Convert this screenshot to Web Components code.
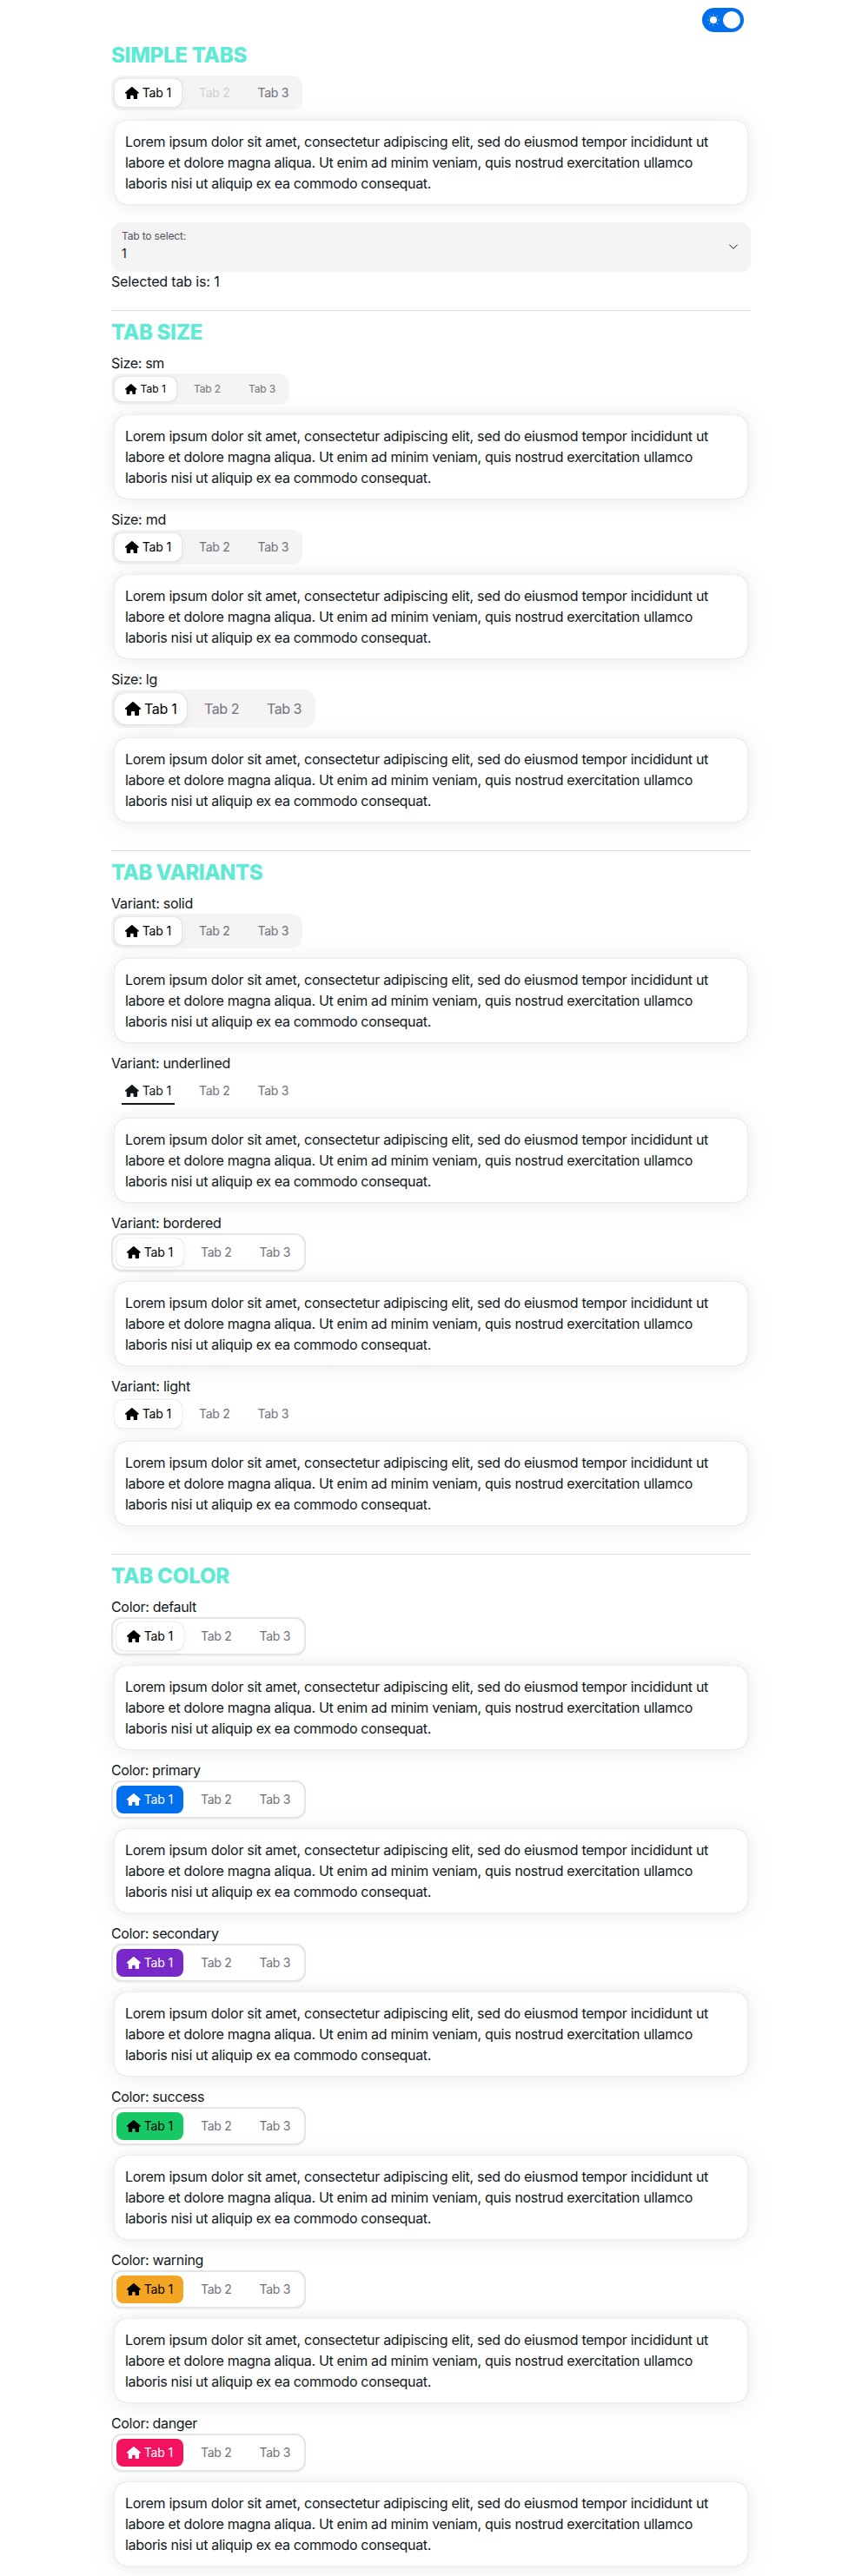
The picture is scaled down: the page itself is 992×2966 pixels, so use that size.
<!DOCTYPE html>
<html lang="en"><head><meta charset="utf-8"><title>Tabs</title>
<style>
body{margin:0;background:#fff;color:#11181c;font:16px/24px Inter,"Liberation Sans",sans-serif}
</style></head><body>
<demo-page></demo-page>
<script>
const define=(name,html,setup)=>{
  const t=document.createElement('template');t.innerHTML=html;
  customElements.define(name,class extends HTMLElement{
    constructor(){super();this.attachShadow({mode:'open'}).append(t.content.cloneNode(true));}
    connectedCallback(){if(setup)setup(this,this.shadowRoot);}
  });
};

// <fit-text w="120">: one line of text, tracked so that its advance is w pixels.
define('fit-text',`<style>:host{display:inline-block;white-space:nowrap;vertical-align:top}</style><slot></slot>`,h=>{
  const w=parseFloat(h.getAttribute('w'));
  if(!w)return;
  h.style.letterSpacing='0px';
  const natural=h.getBoundingClientRect().width;
  if(natural)h.style.letterSpacing=((w-natural)/h.textContent.length).toFixed(3)+'px';
});

define('home-icon',`<style>:host{display:block;flex:none;width:1.125em;height:1em}svg{display:block;width:100%;height:100%}</style>
<svg viewBox="0 0 576 512" fill="currentColor"><path d="M575.8 255.5c0 18-15 32.1-32 32.1h-32l.7 160.2c0 2.7-.2 5.4-.5 8.1V472c0 22.1-17.9 40-40 40H456c-1.1 0-2.2 0-3.3-.1c-1.4 .1-2.8 .1-4.2 .1H416 392c-22.1 0-40-17.900-40-40V448 384c0-17.700-14.300-32-32-32H256c-17.700 0-32 14.300-32 32v64 24c0 22.100-17.900 40-40 40H160 128.100c-1.500 0-3-.1-4.500-.2c-1.200 .1-2.400 .2-3.600 .2H104c-22.100 0-40-17.900-40-40V360c0-.9 0-1.900 .1-2.800V287.600H32c-18 0-32-14-32-32.100c0-9 3-17 10-24L266.400 8c7-7 15-8 22-8s15 2 21 7L564.800 231.500c8 7 12 15 11 24z"/></svg>`);

define('tab-item',`<style>
:host{box-sizing:border-box;display:flex;align-items:center;gap:4px;height:var(--tab-h);padding:0 12px;color:#71717a;border-radius:var(--tab-r);white-space:nowrap}
:host([disabled]){color:#d0d0d3}
:host([selected]){background:var(--cursor,#fff);color:var(--cursor-fg,#000);box-shadow:var(--cursor-shadow)}
:host([selected][underlined]){background:none;box-shadow:none;color:#11181c;position:relative}
:host([selected][underlined])::after{content:"";position:absolute;bottom:0;left:10%;width:80%;height:2px;background:#11181c}
</style><slot name="icon"></slot><slot></slot>`);

define('tab-list',`<style>
:host{display:flex;--tab-h:32px;--tab-r:8px;--cursor-shadow:0 0 5px rgba(0,0,0,.02),0 2px 10px rgba(0,0,0,.06),0 0 1px rgba(0,0,0,.3);font-size:14px;line-height:20px}
.bar{display:flex;gap:8px;padding:4px;background:#f4f4f4;border-radius:12px;height:var(--tab-h)}
:host([size=sm]){--tab-h:28px;font-size:12px;line-height:16px}
:host([size=lg]){--tab-h:36px;--tab-r:12px;font-size:16px;line-height:24px}
:host([size=lg]) .bar{border-radius:14px}
:host([variant=underlined]) .bar,:host([variant=light]) .bar{background:none}
:host([variant=bordered]) .bar{background:none;border:2px solid #e4e4e5;box-shadow:0 1px 2px rgba(0,0,0,.05)}
:host([color=primary]){--cursor:#006fee;--cursor-fg:#fff;--cursor-shadow:none}
:host([color=secondary]){--cursor:#7828c8;--cursor-fg:#fff;--cursor-shadow:none}
:host([color=success]){--cursor:#17c964;--cursor-shadow:none}
:host([color=warning]){--cursor:#f5a524;--cursor-shadow:none}
:host([color=danger]){--cursor:#f31260;--cursor-fg:#fff;--cursor-shadow:none}
tab-item:nth-child(1){width:77px} tab-item:nth-child(n+2){width:59.5px}
:host([size=sm]) tab-item:nth-child(1){width:71px} :host([size=sm]) tab-item:nth-child(n+2){width:55px}
:host([size=lg]) tab-item:nth-child(1){width:83px} :host([size=lg]) tab-item:nth-child(n+2){width:64px}
</style><div class="bar"></div>`,
(h,r)=>{
  const [a,b]={sm:[29.3,31],md:[33.3,35.5],lg:[37.5,40]}[h.getAttribute('size')||'md'];
  r.querySelector('.bar').innerHTML=`<tab-item selected><home-icon slot="icon"></home-icon><fit-text w="${a}">Tab 1</fit-text></tab-item><tab-item><fit-text w="${b}">Tab 2</fit-text></tab-item><tab-item><fit-text w="${b}">Tab 3</fit-text></tab-item>`;
  const items=r.querySelectorAll('tab-item');
  if(h.getAttribute('variant')==='underlined')items[0].setAttribute('underlined','');
  if(h.hasAttribute('disabled-key'))items[h.getAttribute('disabled-key')-1].setAttribute('disabled','');
});

define('tab-panel',`<style>
:host{display:block;padding:12px 4px}
.card{box-sizing:border-box;height:96px;padding:12px;border-radius:14px;background:#fff;box-shadow:0 0 15px rgba(0,0,0,.03),0 2px 30px rgba(0,0,0,.08),0 0 1px rgba(0,0,0,.3)}
p{margin:0;height:24px}
</style><div class="card"></div>`,(h,r)=>{
  r.querySelector('.card').innerHTML=`<p><fit-text w="671">Lorem ipsum dolor sit amet, consectetur adipiscing elit, sed do eiusmod tempor incididunt ut</fit-text></p><p><fit-text w="653">labore et dolore magna aliqua. Ut enim ad minim veniam, quis nostrud exercitation ullamco</fit-text></p><p><fit-text w="352">laboris nisi ut aliquip ex ea commodo consequat.</fit-text></p>`;
});

define('tab-example',`<style>:host{display:block}.label{height:24px}</style>
<div class="label"></div><div class="tabs"></div><tab-panel></tab-panel>`,
(h,r)=>{
  const f=document.createElement('fit-text');
  f.setAttribute('w',h.getAttribute('w'));
  f.textContent=h.getAttribute('label');
  r.querySelector('.label').append(f);
  const l=document.createElement('tab-list');
  for(const a of ['size','variant','color'])if(h.hasAttribute(a))l.setAttribute(a,h.getAttribute(a));
  r.querySelector('.tabs').append(l);
});

define('theme-switch',`<style>
:host{display:flex;width:48px;height:28px;border-radius:14px;background:#006fee;align-items:center;justify-content:space-between;padding:0 4px 0 6px;box-sizing:border-box}
svg{width:14px;height:14px}i{width:20px;height:20px;border-radius:50%;background:#fff}
</style><svg viewBox="0 0 24 24" fill="#fff"><circle cx="12" cy="12" r="7"/><g opacity=".7"><circle cx="12" cy="1.5" r="1.2"/><circle cx="12" cy="22.5" r="1.2"/><circle cx="1.5" cy="12" r="1.2"/><circle cx="22.5" cy="12" r="1.2"/><circle cx="4.5" cy="4.5" r="1.2"/><circle cx="19.5" cy="4.5" r="1.2"/><circle cx="4.5" cy="19.5" r="1.2"/><circle cx="19.5" cy="19.5" r="1.2"/></g></svg><i></i>`);

define('select-box',`<style>
:host{box-sizing:border-box;display:flex;align-items:center;justify-content:space-between;height:56px;margin-top:9px;padding:0 12px;border-radius:12px;background:#f4f4f4;box-shadow:0 1px 2px rgba(0,0,0,.05)}
.t{display:flex;flex-direction:column;gap:2px;padding-bottom:2px}.l{font-size:12px;line-height:16px;color:#52525b}.v{font-size:14px;line-height:20px}
svg{width:16px;height:16px}
</style><div class="t"><span class="l"><slot name="label"></slot></span><span class="v"><slot></slot></span></div>
<svg viewBox="0 0 24 24" fill="none" stroke="#11181c" stroke-width="1.5" stroke-linecap="round" stroke-linejoin="round"><path d="m5.500 9 6.500 6.500L18.500 9"/></svg>`);

define('demo-section',`<style>
:host{display:block}
:host([divided]){border-top:1px solid #dbdbdb;padding-top:7px}
h2{margin:0 0 5px;height:36px;font-size:24px;line-height:36px;font-weight:800;color:#5eead4}
</style><h2></h2><slot></slot>`,(h,r)=>{
  r.querySelector('h2').innerHTML=`<fit-text w="${h.getAttribute('w')}">${h.getAttribute('heading')}</fit-text>`;
});

define('demo-page',`<style>
:host{display:block;box-sizing:border-box;width:992px;height:2966px;padding:9px 128px 0;overflow:hidden}
header{display:flex;justify-content:flex-end;padding-right:8px;height:37px}
demo-section{margin-bottom:21px}
.sel{height:24px}
</style>
<header><theme-switch></theme-switch></header>
<demo-section heading="SIMPLE TABS" w="156"><tab-list disabled-key="2"></tab-list><tab-panel></tab-panel><select-box><fit-text slot="label" w="74">Tab to select:</fit-text>1</select-box><div class="sel"><fit-text w="124.500">Selected tab is: 1</fit-text></div></demo-section>
<demo-section divided heading="TAB SIZE" w="105"><tab-example size="sm" label="Size: sm" w="61"></tab-example><tab-example label="Size: md" w="63"></tab-example><tab-example size="lg" label="Size: lg" w="53"></tab-example></demo-section>
<demo-section divided heading="TAB VARIANTS" w="174"><tab-example label="Variant: solid" w="94"></tab-example><tab-example variant="underlined" label="Variant: underlined" w="137"></tab-example><tab-example variant="bordered" label="Variant: bordered" w="126.500"></tab-example><tab-example variant="light" label="Variant: light" w="91"></tab-example></demo-section>
<demo-section divided heading="TAB COLOR" w="136"><tab-example variant="bordered" label="Color: default" w="98"></tab-example><tab-example variant="bordered" color="primary" label="Color: primary" w="102.500"></tab-example><tab-example variant="bordered" color="secondary" label="Color: secondary" w="123.500"></tab-example><tab-example variant="bordered" color="success" label="Color: success" w="107"></tab-example><tab-example variant="bordered" color="warning" label="Color: warning" w="106"></tab-example><tab-example variant="bordered" color="danger" label="Color: danger" w="99"></tab-example></demo-section>`);
</script></body></html>
